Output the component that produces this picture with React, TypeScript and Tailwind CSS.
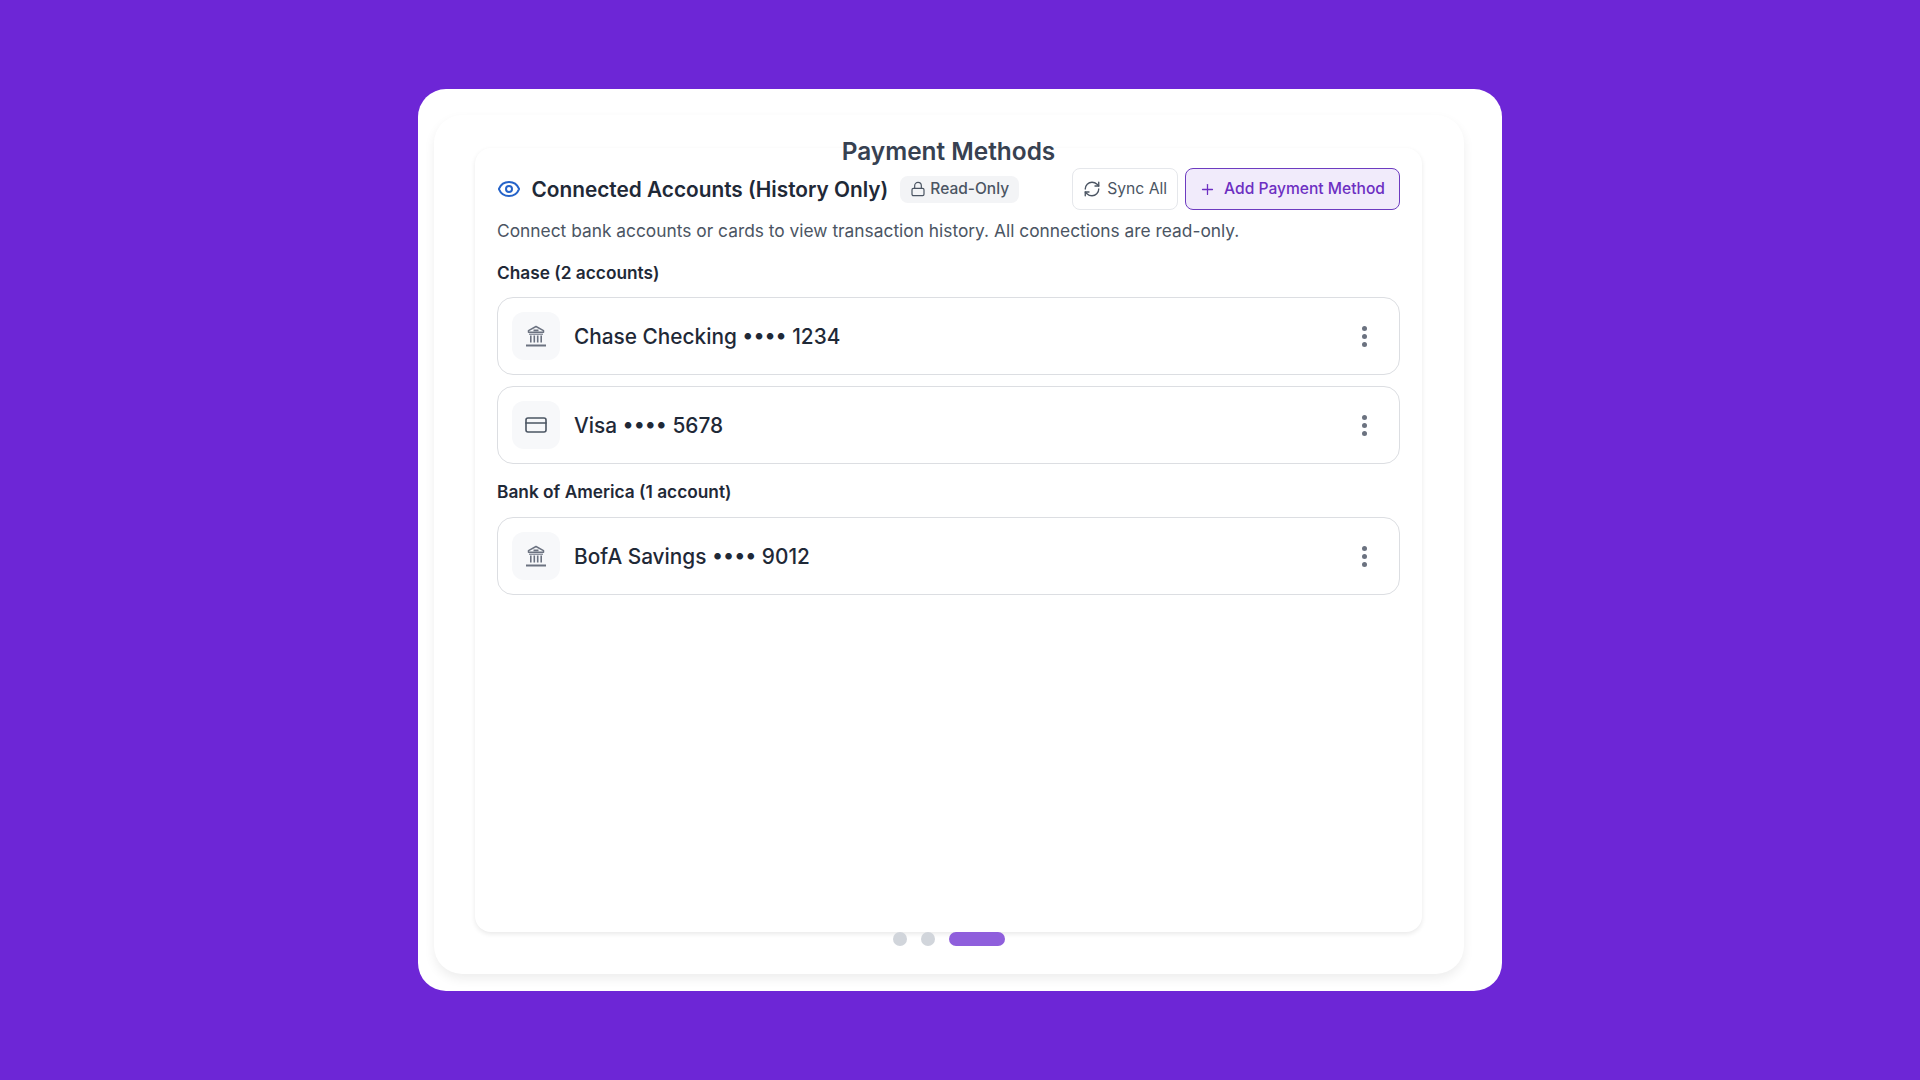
import { Eye, Lock, RefreshCw, Plus, CreditCard } from "lucide-react";

function Bank() {
  return (
    <svg width="24" height="24" viewBox="0 0 24 24" fill="none" stroke="#6b7280" strokeWidth="1.5">
      <path d="M12 2.5 4.5 6.6v1.6h15V6.6z" strokeLinejoin="round" fill="none" />
      <path d="M9.5 6.4h5" strokeWidth="1.8" />
      <path d="M5 10.2h14" strokeWidth="1.1" />
      <path d="M6.8 11.5v7M10.3 11.5v7M13.7 11.5v7M17.2 11.5v7" strokeWidth="1.6" />
      <path d="M2 21.5h20" strokeWidth="2" />
    </svg>
  );
}

function Dots() {
  return (
    <div className="flex flex-col items-center gap-[3px] mr-[32px]">
      <span className="block w-[5px] h-[5px] rounded-full bg-[#6b7280]" />
      <span className="block w-[5px] h-[5px] rounded-full bg-[#6b7280]" />
      <span className="block w-[5px] h-[5px] rounded-full bg-[#6b7280]" />
    </div>
  );
}

function Row({ icon, label, className = "" }: { icon: React.ReactNode; label: string; className?: string }) {
  return (
    <div className={`flex items-center h-[78px] rounded-[16px] border border-[#dcdee2] bg-white pl-[14px] ${className}`}>
      <div className="flex items-center justify-center w-[48px] h-[48px] rounded-[12px] bg-[#f7f8fa]">{icon}</div>
      <span className="ml-[14px] pt-[2px] flex-1 text-[20.8px] leading-[28px] font-medium text-[#1f2937]">{label}</span>
      <Dots />
    </div>
  );
}

export default function App() {
  return (
    <div className="w-full h-screen bg-[#6d26d6] flex items-center justify-center font-['Inter',sans-serif]">
      <div className="w-[1084px] h-[902px] rounded-[28px] bg-white pl-[16px] pr-[38px] pt-[26px] pb-[17px]">
        <div className="h-full rounded-[28px] bg-white shadow-[0_5px_11px_rgba(0,0,0,0.07)] pt-[20px] pl-[41px] pr-[42px] pb-[28px] flex flex-col">
          <h1 className="text-center text-[24.4px] leading-[32px] font-semibold text-[#374151] mb-[-19px] relative z-10">Payment Methods</h1>
          <div className="flex-1 rounded-[16px] bg-white shadow-[0_2px_5px_rgba(0,0,0,0.09)] px-[22px] pt-[20px]">
            <div className="flex items-center h-[42px]">
              <Eye size={24} className="text-[#2563c9] mr-[10.5px]" strokeWidth={2} />
              <span className="pt-[1px] text-[20.8px] leading-[28px] font-semibold text-[#1f2937]">Connected Accounts (History Only)</span>
              <span className="ml-[12px] flex items-center gap-[4px] h-[27px] px-[10px] rounded-[8px] bg-[#f3f4f6] text-[15.5px] font-medium text-[#4b5563]">
                <Lock size={16} strokeWidth={1.8} />
                Read-Only
              </span>
              <div className="ml-auto flex items-center gap-[7px]">
                <button className="flex items-center gap-[6px] h-[42px] pl-[10px] pr-[10px] rounded-[8px] border border-[#e5e7eb] bg-white text-[15.7px] text-[#4b5563]">
                  <RefreshCw size={18} strokeWidth={1.8} />
                  Sync All
                </button>
                <button className="flex items-center gap-[8px] h-[42px] pl-[13px] pr-[14px] rounded-[8px] border border-[#6d3bc0] bg-[#f1ebfb] text-[15.6px] font-medium text-[#6d2fc2]">
                  <Plus size={17} strokeWidth={1.8} />
                  Add Payment Method
                </button>
              </div>
            </div>
            <p className="mt-[9px] text-[17.35px] leading-[24px] text-[#4b5563]">Connect bank accounts or cards to view transaction history. All connections are read-only.</p>
            <h3 className="mt-[17px] pt-[1px] text-[17.3px] leading-[24px] font-semibold text-[#1f2937]">Chase (2 accounts)</h3>
            <Row className="mt-[12px]" icon={<Bank />} label="Chase Checking •••• 1234" />
            <Row className="mt-[11px]" icon={<CreditCard size={24} strokeWidth={1.6} className="text-[#4b5563]" />} label="Visa •••• 5678" />
            <h3 className="mt-[16px] text-[17.3px] leading-[24px] font-semibold text-[#1f2937]">Bank of America (1 account)</h3>
            <Row className="mt-[13px]" icon={<Bank />} label="BofA Savings •••• 9012" />
          </div>
          <div className="flex items-center justify-center gap-[14px] h-[14px] relative z-10">
            <span className="block w-[14px] h-[14px] rounded-full bg-[#d1d5db]" />
            <span className="block w-[14px] h-[14px] rounded-full bg-[#d1d5db]" />
            <span className="block w-[56px] h-[14px] rounded-full bg-[#8f5fdc]" />
          </div>
        </div>
      </div>
    </div>
  );
}
